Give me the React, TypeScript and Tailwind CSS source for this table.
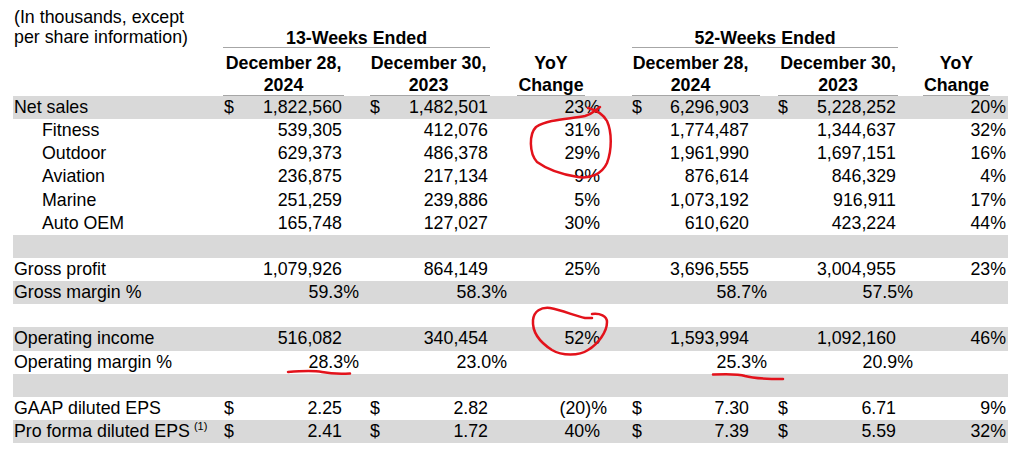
type Vals = [string, string, string, string, string, string];

type Row = {
  label: string;
  indent?: boolean;
  band?: boolean;
  sup?: string;
  dollar?: boolean;
  margin?: boolean;
  v?: Vals;
};

const rows: Row[] = [
  { label: "Net sales", band: true, dollar: true, v: ["1,822,560", "1,482,501", "23%", "6,296,903", "5,228,252", "20%"] },
  { label: "Fitness", indent: true, v: ["539,305", "412,076", "31%", "1,774,487", "1,344,637", "32%"] },
  { label: "Outdoor", indent: true, v: ["629,373", "486,378", "29%", "1,961,990", "1,697,151", "16%"] },
  { label: "Aviation", indent: true, v: ["236,875", "217,134", "9%", "876,614", "846,329", "4%"] },
  { label: "Marine", indent: true, v: ["251,259", "239,886", "5%", "1,073,192", "916,911", "17%"] },
  { label: "Auto OEM", indent: true, v: ["165,748", "127,027", "30%", "610,620", "423,224", "44%"] },
  { label: "", band: true },
  { label: "Gross profit", v: ["1,079,926", "864,149", "25%", "3,696,555", "3,004,955", "23%"] },
  { label: "Gross margin %", band: true, margin: true, v: ["59.3%", "58.3%", "", "58.7%", "57.5%", ""] },
  { label: "" },
  { label: "Operating income", band: true, v: ["516,082", "340,454", "52%", "1,593,994", "1,092,160", "46%"] },
  { label: "Operating margin %", margin: true, v: ["28.3%", "23.0%", "", "25.3%", "20.9%", ""] },
  { label: "", band: true },
  { label: "GAAP diluted EPS", dollar: true, v: ["2.25", "2.82", "(20)%", "7.30", "6.71", "9%"] },
  { label: "Pro forma diluted EPS", sup: "(1)", band: true, dollar: true, v: ["2.41", "1.72", "40%", "7.39", "5.59", "32%"] },
];

// amount columns: width + padding, and how far a margin % hangs past the column
const amountCols = [
  { box: "w-[122px] pl-[2px] pr-[2px]", hang: "-mr-[17px]" },
  { box: "w-[146px] pl-[26px] pr-[2px]", hang: "-mr-[19px]" },
  { box: "w-[152px] pl-[24px] pr-[11px]", hang: "-mr-[18px]" },
  { box: "w-[138px] pl-[18px] pr-[2px]", hang: "-mr-[17px]" },
];

function Amount({ col, value, dollar, margin }: { col: number; value?: string; dollar?: boolean; margin?: boolean }) {
  const c = amountCols[col];
  return (
    <div className={`flex shrink-0 items-center justify-between ${c.box}`}>
      <span>{dollar ? "$" : ""}</span>
      <span className={margin ? c.hang : ""}>{value}</span>
    </div>
  );
}

function Change({ value, wide }: { value?: string; wide?: boolean }) {
  const neg = value?.startsWith("(");
  return (
    <div className={`flex shrink-0 items-center justify-end ${wide ? "w-[110px] pr-[2px]" : "w-[118px] pr-[8px]"}`}>
      <span className={neg ? "-mr-[7px]" : ""}>{value}</span>
    </div>
  );
}

function DataRow({ row }: { row: Row }) {
  const v = row.v;
  return (
    <div className={`flex h-[23.15px] w-[995px] items-center leading-[23px] ${row.band ? "bg-[#d9d9d9]" : ""}`}>
      <div className={`flex w-[209px] shrink-0 items-start whitespace-nowrap ${row.indent ? "pl-[29px]" : "pl-[1px]"}`}>
        {row.label}
        {row.sup && <span className="ml-[4px] -mt-[1px] text-[11px] leading-[14px]">{row.sup}</span>}
      </div>
      {v && (
        <>
          <Amount col={0} value={v[0]} dollar={row.dollar} margin={row.margin} />
          <Amount col={1} value={v[1]} dollar={row.dollar} margin={row.margin} />
          <Change value={v[2]} />
          <Amount col={2} value={v[3]} dollar={row.dollar} margin={row.margin} />
          <Amount col={3} value={v[4]} dollar={row.dollar} margin={row.margin} />
          <Change value={v[5]} wide />
        </>
      )}
    </div>
  );
}

function DateHead({ top, bottom }: { top: string; bottom: string }) {
  return (
    <>
      <div className="whitespace-nowrap leading-[26px]">{top}</div>
      <div className="whitespace-nowrap leading-[19px]">{bottom}</div>
    </>
  );
}

function Header() {
  return (
    <div className="font-bold">
      <div className="flex h-[48px] items-end">
        <div className="w-[209px] shrink-0 pb-[1.5px] pl-[1px] font-normal leading-[20px]">
          <div>(In thousands, except</div>
          <div>per share information)</div>
        </div>
        <div className="w-[268px] shrink-0 pl-[1px]">
          <div className="border-b border-[#a6a6a6] text-center leading-[18px]">13-Weeks Ended</div>
        </div>
        <div className="w-[118px] shrink-0" />
        <div className="w-[290px] shrink-0 pl-[24px]">
          <div className="border-b border-[#a6a6a6] text-center leading-[18px]">52-Weeks Ended</div>
        </div>
        <div className="w-[110px] shrink-0" />
      </div>
      <div className="flex h-[48px] items-end">
        <div className="w-[209px] shrink-0" />
        <div className="w-[122px] shrink-0 pl-[1px]">
          <div className="border-b border-[#a6a6a6] text-center">
            <DateHead top="December 28," bottom="2024" />
          </div>
        </div>
        <div className="w-[146px] shrink-0 pl-[26px]">
          <div className="border-b border-[#a6a6a6] pr-[3px] text-center">
            <DateHead top="December 30," bottom="2023" />
          </div>
        </div>
        <div className="w-[118px] shrink-0 pl-[27px]">
          <div className="w-[68px] border-b border-[#a6a6a6] text-center">
            <DateHead top="YoY" bottom="Change" />
          </div>
        </div>
        <div className="w-[152px] shrink-0 pl-[24px]">
          <div className="border-b border-[#a6a6a6] pr-[11px] text-center">
            <DateHead top="December 28," bottom="2024" />
          </div>
        </div>
        <div className="w-[138px] shrink-0 pl-[18px]">
          <div className="border-b border-[#a6a6a6] text-center">
            <DateHead top="December 30," bottom="2023" />
          </div>
        </div>
        <div className="w-[110px] shrink-0 pl-[25px]">
          <div className="w-[67px] border-b border-[#a6a6a6] text-center">
            <DateHead top="YoY" bottom="Change" />
          </div>
        </div>
      </div>
    </div>
  );
}

function Markup() {
  // red pen marks drawn over the table
  return (
    <svg className="pointer-events-none absolute left-0 top-0" width="1024" height="453" viewBox="0 0 1024 453" fill="none">
      <g stroke="#e3121b" strokeWidth="2.5" strokeLinecap="round" strokeLinejoin="round">
        <path d="M588,108 C596,110 603,114 607,121 C612,132 612,150 607,163 C602,174 590,179 578,177 C565,175 548,170 537,162 C529,153 529,134 536,127 C548,119 570,119 585,116 C592,114 596,110 600,107" />
        <path d="M592,314 C600,313 607,316 607,322 C607,332 598,344 588,350 C579,356 562,356 552,350 C541,343 532,333 533,320 C534,311 541,307 550,308 C562,310 575,316 585,318 L592,318" />
        <path d="M288,372 C300,371 312,370 322,372 C332,374 342,374 350,373.5" />
        <path d="M713,374.5 C725,374 738,373.5 745,376 C755,379 770,379 783,379" />
      </g>
    </svg>
  );
}

export default function App() {
  return (
    <div
      className="relative h-[453px] w-[1024px] overflow-hidden bg-white pl-[13px] text-[17.8px] text-black"
      style={{ fontFamily: '"Liberation Sans", Arial, sans-serif' }}
    >
      <Header />
      {rows.map((row, i) => (
        <DataRow key={i} row={row} />
      ))}
      <Markup />
    </div>
  );
}
